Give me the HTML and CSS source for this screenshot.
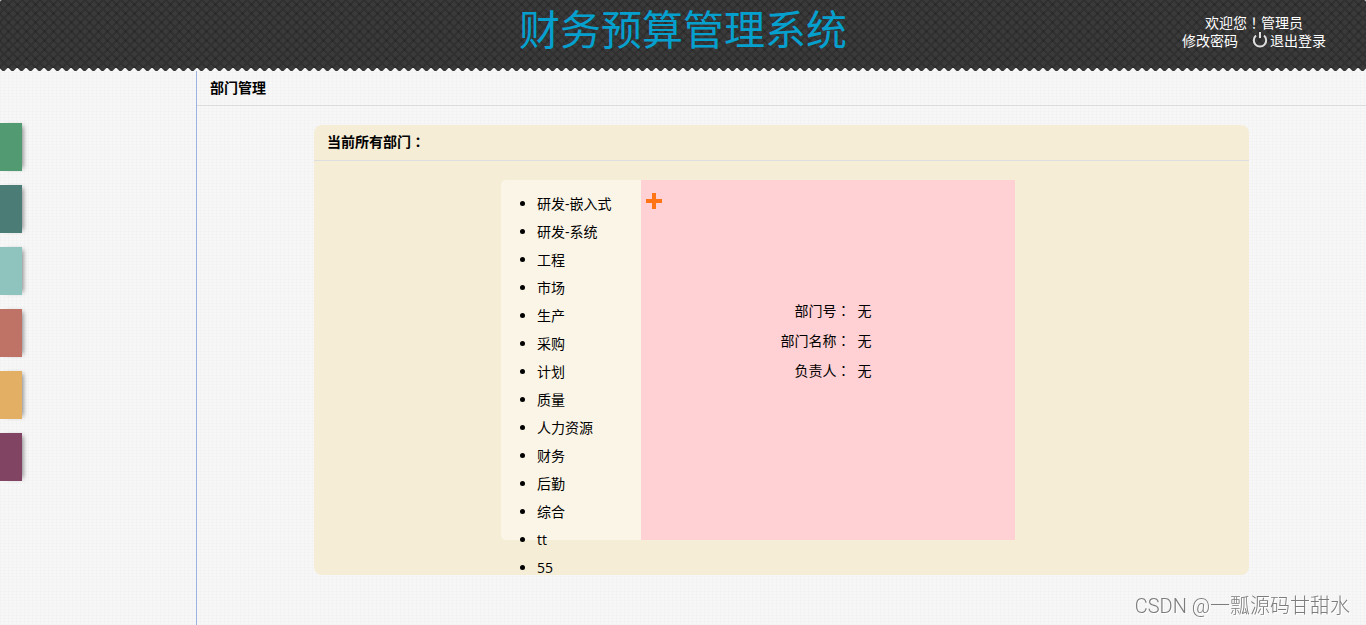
FILE: index.html
```html
<!DOCTYPE html>
<html lang="zh-CN">
<head>
    <meta charset="UTF-8">
    <meta name="viewport" content="width=device-width, initial-scale=1.0">
    <title>财务预算管理系统</title>
    <link rel="stylesheet" href="styles.css">
</head>
<body>
    <header class="header">
        <h1>财务预算管理系统</h1>
        <div class="user">
            <p>欢迎您<span class="punct" lang="zh-TW">！</span>管理员</p>
            <p class="user-links">
                <a href="#">修改密码</a>
                <a href="#" class="logout">
                    <svg width="16" height="18" viewBox="0 0 16 18" aria-hidden="true">
                        <path d="M4 3.6A6.2 6.2 0 1 0 12 3.6" fill="none" stroke="#dedede" stroke-width="2"/>
                        <path d="M8 0v6" stroke="#dedede" stroke-width="2"/>
                    </svg>退出登录</a>
            </p>
        </div>
    </header>

    <div class="main">
        <nav class="sidebar">
            <a href="#" class="tab green" aria-label="菜单一"></a>
            <a href="#" class="tab teal" aria-label="菜单二"></a>
            <a href="#" class="tab aqua" aria-label="菜单三"></a>
            <a href="#" class="tab red" aria-label="菜单四"></a>
            <a href="#" class="tab orange" aria-label="菜单五"></a>
            <a href="#" class="tab purple" aria-label="菜单六"></a>
        </nav>

        <main class="content">
            <h2 class="title">部门管理</h2>
            <section class="panel">
                <h3 class="title">当前所有部门<span class="punct" lang="zh-TW">：</span></h3>
                <div class="dept">
                    <ul class="dept-list">
                        <li>研发-嵌入式</li>
                        <li>研发-系统</li>
                        <li>工程</li>
                        <li>市场</li>
                        <li>生产</li>
                        <li>采购</li>
                        <li>计划</li>
                        <li>质量</li>
                        <li>人力资源</li>
                        <li>财务</li>
                        <li>后勤</li>
                        <li>综合</li>
                        <li>tt</li>
                        <li>55</li>
                    </ul>
                    <div class="dept-info">
                        <button type="button" class="add-btn" aria-label="添加部门">
                            <svg width="16" height="16" viewBox="0 0 16 16" aria-hidden="true">
                                <path d="M8 0v16M0 8h16" stroke="#ff7414" stroke-width="4"/>
                            </svg>
                        </button>
                        <table>
                            <tr><th>部门号<span class="punct" lang="zh-TW">：</span></th><td>无</td></tr>
                            <tr><th>部门名称<span class="punct" lang="zh-TW">：</span></th><td>无</td></tr>
                            <tr><th>负责人<span class="punct" lang="zh-TW">：</span></th><td>无</td></tr>
                        </table>
                    </div>
                </div>
            </section>
        </main>
    </div>

    <div class="watermark">CSDN @一瓢源码甘甜水</div>
</body>
</html>
```
FILE: styles.css
```css
* {
    margin: 0;
    padding: 0;
    box-sizing: border-box;
}

body {
    min-height: 100vh;
    display: flex;
    flex-direction: column;
    font-family: "Open Sans", "Noto Sans CJK SC", sans-serif;
    font-size: 14px;
    color: #000;
    /* fine linen weave */
    background:
        repeating-linear-gradient(0deg, rgba(0, 0, 0, 0.01) 0 1px, transparent 1px 3px),
        repeating-linear-gradient(90deg, rgba(0, 0, 0, 0.01) 0 1px, transparent 1px 4px),
        #f7f7f7;
}

a {
    color: inherit;
    text-decoration: none;
}

/* full-width punctuation centred in its cell */
.punct {
    font-family: "Noto Sans CJK TC", sans-serif;
    line-height: 1;
}

.header {
    position: relative;
    height: 71px;
    display: grid;
    grid-template-columns: 1fr auto 1fr;
    color: #fff;
    border-radius: 2px 2px 0 0;
    background:
        linear-gradient(45deg, transparent 43%, rgba(0, 0, 0, 0.16) 43% 57%, transparent 57%) 4px 0 / 9px 9px,
        linear-gradient(-45deg, transparent 43%, rgba(0, 0, 0, 0.16) 43% 57%, transparent 57%) 4px 0 / 9px 9px,
        #3a3a3a;
}

/* zigzag lower edge */
.header::after {
    content: "";
    position: absolute;
    left: 0;
    right: 0;
    bottom: 0;
    height: 3px;
    background:
        linear-gradient(45deg, #f7f7f7 2px, transparent 3px) 8px 0 / 9px 3px,
        linear-gradient(-45deg, #f7f7f7 2px, transparent 3px) 8px 0 / 9px 3px;
}

.header h1 {
    grid-column: 2;
    color: #06a0cf;
    font-family: "Noto Sans CJK SC", sans-serif;
    font-size: 41px;
    font-weight: 400;
    line-height: 54px;
}

.user {
    justify-self: end;
    padding: 14px 40px 0 0;
    text-align: center;
    line-height: 18px;
}

.user-links {
    display: flex;
    gap: 14px;
}

.logout {
    display: flex;
    gap: 2px;
}

.main {
    flex: 1;
    display: flex;
}

.sidebar {
    width: 197px;
    padding-top: 52px;
    display: flex;
    flex-direction: column;
    gap: 14px;
    border-right: 1px solid #9db2df;
}

.tab {
    width: 22px;
    height: 48px;
    box-shadow: 4px 0 5px -3px rgba(0, 0, 0, 0.5);
}

.green { background: #529a72; }
.teal { background: #4b7d76; }
.aqua { background: #8fc3be; }
.red { background: #bf7367; }
.orange { background: #e2af64; }
.purple { background: #814462; }

.content {
    flex: 1;
}

.title {
    height: 35px;
    padding-left: 13px;
    font-size: 14px;
    font-weight: bold;
    line-height: 34px;
    border-bottom: 1px solid #dcdcdc;
}

.panel {
    width: 80%;
    height: 450px;
    margin: 19px auto 0;
    border-radius: 8px;
    background: #f6edd6;
}

.panel .title {
    height: 36px;
    border-color: #dcdee0;
}

.dept {
    display: flex;
    width: 55%;
    height: 360px;
    margin: 19px 0 0 20%;
}

.dept-list {
    width: 140px;
    padding: 10px 0 0 36px;
    line-height: 28px;
    background: #fbf5e7;
    border-radius: 5px 0 0 5px;
}

.dept-info {
    flex: 1;
    padding: 13px 5px;
    background: #ffd1d4;
}

.add-btn {
    display: block;
    width: 16px;
    height: 16px;
    border: none;
    background: none;
    cursor: pointer;
}

.add-btn svg {
    display: block;
}

.dept-info table {
    margin: 87px auto 0;
    border-collapse: collapse;
    line-height: 30px;
}

.dept-info th {
    padding-right: 7px;
    font-weight: 400;
    text-align: right;
}

.dept-info td {
    padding-right: 4px;
}

.watermark {
    position: fixed;
    right: 16px;
    bottom: 6px;
    font-family: Roboto, "Noto Sans CJK SC", sans-serif;
    font-size: 20px;
    font-weight: 300;
    line-height: 26px;
    color: #7c7c7c;
    text-shadow: 1px 1px 0 #fff;
}
```
